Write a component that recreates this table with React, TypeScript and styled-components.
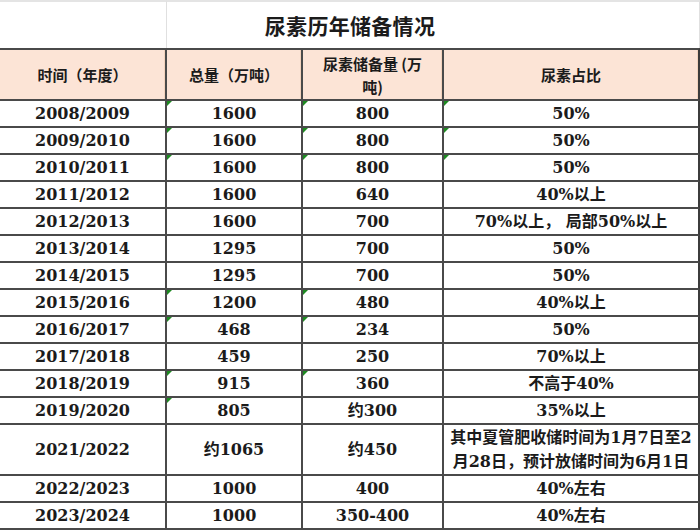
import React from "react";
import styled, { createGlobalStyle, css } from "styled-components";

const Global = createGlobalStyle`
  html, body { margin: 0; padding: 0; background: #ffffff; }
  body { width: 700px; height: 530px; overflow: hidden; }
  * { box-sizing: border-box; }
`;

const LINE = "#4a4a4a";

const Sheet = styled.div`
  width: 700px;
  display: grid;
  grid-template-columns: 167px 136px 141px 256px;
  font-family: "DejaVu Serif", "Noto Sans CJK SC", serif;
  color: #1b1b1b;
`;

const TitleGuide = styled.div`
  grid-row: 1;
  grid-column: 1;
  height: 48px;
  border-top: 2px solid #e4e4e4;
  border-right: 1px solid #e0e0e0;
`;

const TitleRest = styled.div`
  grid-row: 1;
  grid-column: 2 / 5;
  height: 48px;
  border-top: 2px solid #e4e4e4;
  border-right: 1px solid #e0e0e0;
`;

const Title = styled.h1`
  grid-row: 1;
  grid-column: 1 / -1;
  margin: 0;
  height: 48px;
  display: flex;
  align-items: center;
  justify-content: center;
  padding-top: 1px;
  font-family: "Noto Sans CJK SC", sans-serif;
  font-weight: 700;
  font-size: 21px;
  letter-spacing: 0.3px;
  color: #1b1b1b;
`;

const Cell = styled.div<{ $h: number; $head?: boolean; $flag?: boolean; $last?: boolean }>`
  position: relative;
  height: ${(p) => p.$h}px;
  display: flex;
  align-items: center;
  justify-content: center;
  text-align: center;
  border-bottom: 2px solid ${LINE};
  border-right: 2px solid ${(p) => (p.$last ? "#3c3c3c" : LINE)};
  font-weight: 700;
  font-size: 16px;
  line-height: 24px;
  white-space: nowrap;
  ${(p) =>
    p.$head &&
    css`
      background: #fce4d6;
      border-top: 2px solid ${LINE};
      font-family: "Noto Sans CJK SC", sans-serif;
      font-size: 15px;
      line-height: 23px;
      box-shadow: inset -1px 0 0 #f3d3bd;
    `}
  ${(p) =>
    p.$flag &&
    css`
      &::before {
        content: "";
        position: absolute;
        left: 0;
        top: 0;
        width: 0;
        height: 0;
        border-top: 5px solid #1e8a22;
        border-right: 5px solid transparent;
      }
    `}
`;

type Row = {
  year: string;
  total: string;
  reserve: string;
  share: React.ReactNode;
  tall?: boolean;
  f2?: boolean;
  f3?: boolean;
  f4?: boolean;
};

const rows: Row[] = [
  { year: "2008/2009", total: "1600", reserve: "800", share: "50%", f2: true, f3: true, f4: true },
  { year: "2009/2010", total: "1600", reserve: "800", share: "50%", f2: true, f3: true, f4: true },
  { year: "2010/2011", total: "1600", reserve: "800", share: "50%", f2: true, f3: true, f4: true },
  { year: "2011/2012", total: "1600", reserve: "640", share: "40%以上" },
  { year: "2012/2013", total: "1600", reserve: "700", share: "70%以上， 局部50%以上" },
  { year: "2013/2014", total: "1295", reserve: "700", share: "50%" },
  { year: "2014/2015", total: "1295", reserve: "700", share: "50%" },
  { year: "2015/2016", total: "1200", reserve: "480", share: "40%以上", f2: true, f3: true },
  { year: "2016/2017", total: "468", reserve: "234", share: "50%", f2: true, f3: true },
  { year: "2017/2018", total: "459", reserve: "250", share: "70%以上" },
  { year: "2018/2019", total: "915", reserve: "360", share: "不高于40%", f2: true, f3: true },
  { year: "2019/2020", total: "805", reserve: "约300", share: "35%以上", f2: true },
  {
    year: "2021/2022",
    total: "约1065",
    reserve: "约450",
    share: (
      <>
        其中夏管肥收储时间为1月7日至2
        <br />
        月28日，预计放储时间为6月1日
      </>
    ),
    tall: true,
  },
  { year: "2022/2023", total: "1000", reserve: "400", share: "40%左右" },
  { year: "2023/2024", total: "1000", reserve: "350-400", share: "40%左右" },
];

export default function App() {
  return (
    <>
      <Global />
      <Sheet>
        <TitleGuide />
        <TitleRest />
        <Title>尿素历年储备情况</Title>

        <Cell $head $h={53}>时间（年度）</Cell>
        <Cell $head $h={53}>总量（万吨）</Cell>
        <Cell $head $h={53}>
          尿素储备量 (万
          <br />
          吨)
        </Cell>
        <Cell $head $h={53} $last>尿素占比</Cell>

        {rows.map((r) => {
          const h = r.tall ? 51 : 27;
          return (
            <React.Fragment key={r.year}>
              <Cell $h={h}>{r.year}</Cell>
              <Cell $h={h} $flag={r.f2}>{r.total}</Cell>
              <Cell $h={h} $flag={r.f3}>{r.reserve}</Cell>
              <Cell $h={h} $flag={r.f4} $last>{r.share}</Cell>
            </React.Fragment>
          );
        })}
      </Sheet>
    </>
  );
}
